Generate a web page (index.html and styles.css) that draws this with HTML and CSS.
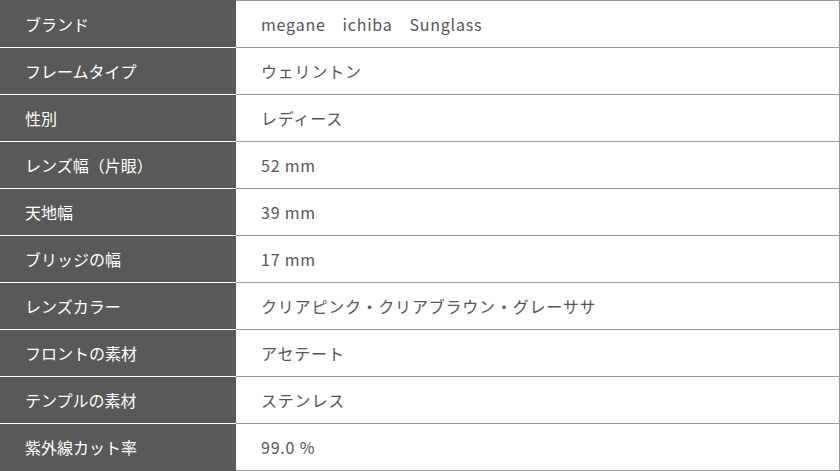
FILE: index.html
```html
<!DOCTYPE html>
<html lang="ja">
<head>
<meta charset="utf-8">
<link rel="stylesheet" href="styles.css">
</head>
<body>
<div class="spec">
  <div class="th first">ブランド</div><div class="td first">megane　ichiba　Sunglass</div>
  <div class="th">フレームタイプ</div><div class="td">ウェリントン</div>
  <div class="th">性別</div><div class="td">レディース</div>
  <div class="th">レンズ幅（片眼）</div><div class="td">52 mm</div>
  <div class="th">天地幅</div><div class="td">39 mm</div>
  <div class="th">ブリッジの幅</div><div class="td">17 mm</div>
  <div class="th">レンズカラー</div><div class="td">クリアピンク・クリアブラウン・グレーササ</div>
  <div class="th">フロントの素材</div><div class="td">アセテート</div>
  <div class="th">テンプルの素材</div><div class="td">ステンレス</div>
  <div class="th last">紫外線カット率</div><div class="td">99.0 %</div>
</div>
</body>
</html>
```
FILE: styles.css
```css
html, body {
  margin: 0;
  padding: 0;
  background: #fff;
}
.spec {
  display: grid;
  grid-template-columns: 236px 1fr;
  width: 840px;
  font-family: "Noto Sans CJK JP", "Noto Sans", sans-serif;
  font-size: 16px;
}
.th, .td {
  box-sizing: border-box;
  height: 47px;
  display: flex;
  align-items: center;
  padding-left: 25px;
}
.th.first, .td.first {
  height: 48px;
}
.th {
  background: #595959;
  color: #fff;
  border-bottom: 1px solid #fff;
}
.th.first {
  border-top: 1px solid #595959;
}
.th.last {
  border-bottom-color: #595959;
}
.td {
  color: #555;
  border-bottom: 1px solid #999;
  border-right: 1px solid #999;
  letter-spacing: 0.05em;
}
.td.first {
  border-top: 1px solid #999;
}
```
